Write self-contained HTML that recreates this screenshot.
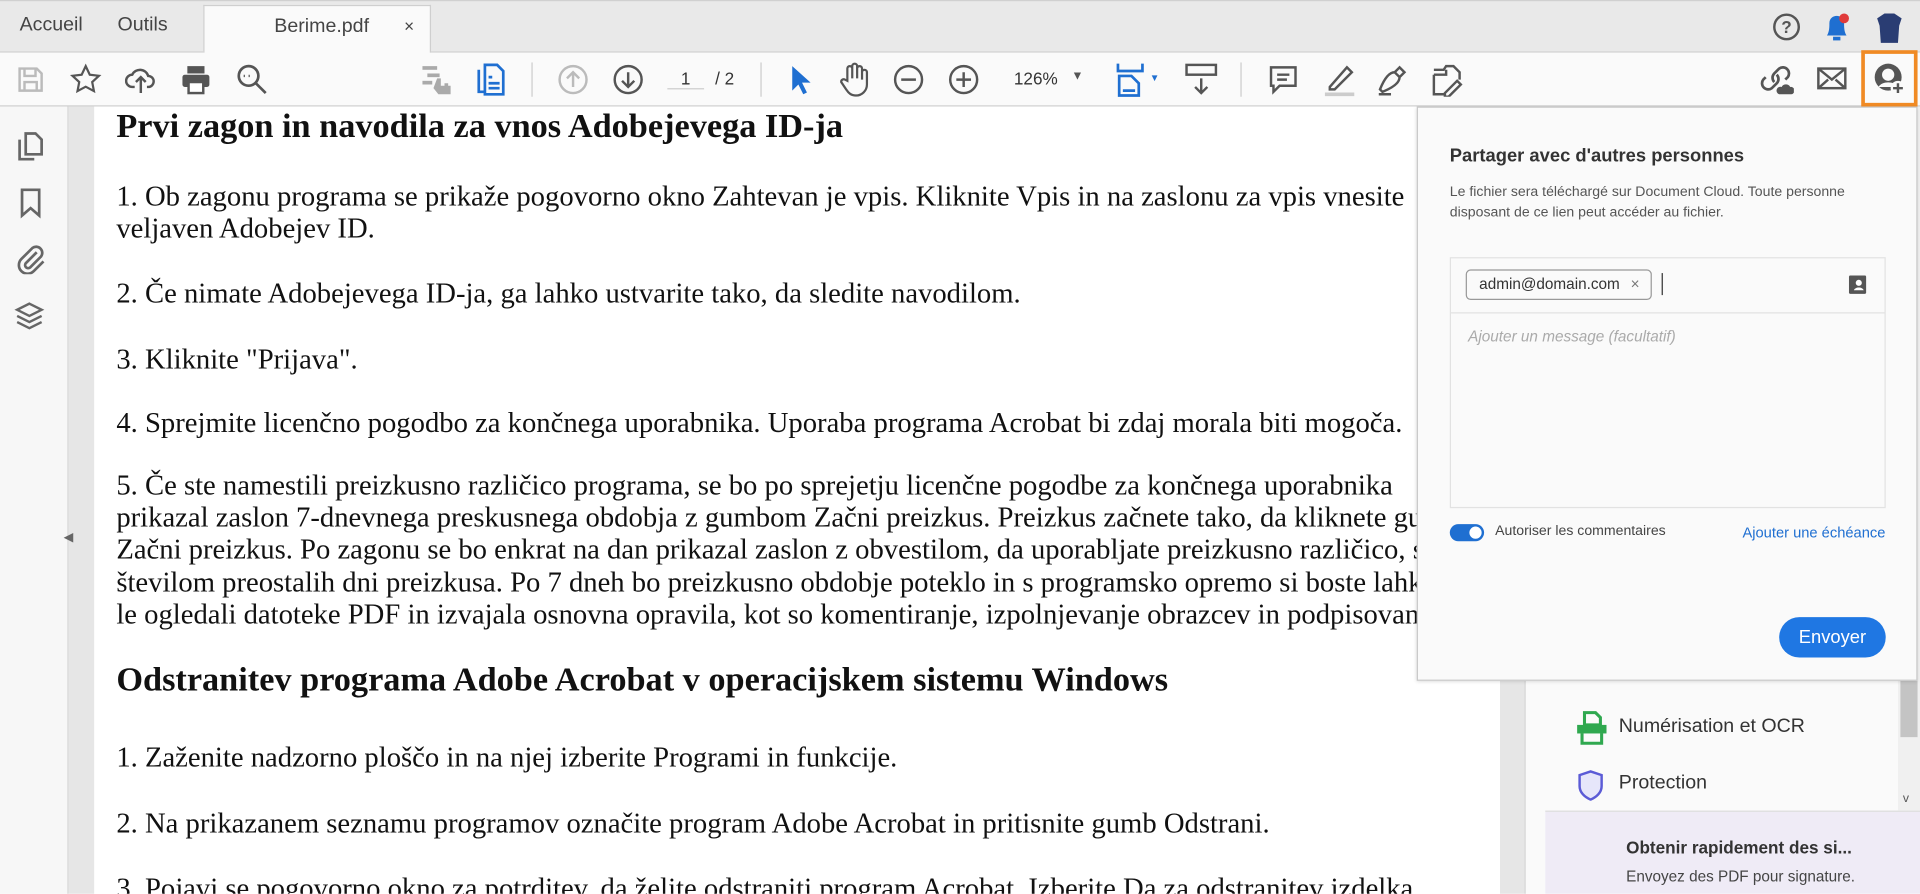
<!DOCTYPE html>
<html><head><meta charset="utf-8"><style>
*{box-sizing:border-box;margin:0;padding:0}
html,body{width:1920px;height:894px;overflow:hidden;background:#fff}
#w{position:absolute;left:0;top:0;width:1568px;height:730px;transform:scale(1.22449);transform-origin:0 0;font-family:"Liberation Sans",sans-serif;overflow:hidden}
.tabs{position:absolute;left:0;top:0;width:1568px;height:43px;background:#e9e9e9;border-top:1px solid #d0d0d0;border-bottom:1px solid #cfcfcf}
.tabs span{position:absolute;top:11px;font-size:16px;color:#444}
.tab{position:absolute;left:166px;top:3px;width:186px;height:40px;background:#fafafa;border:1px solid #cfcfcf;border-bottom:none}
.tb{position:absolute;left:0;top:43px;width:1568px;height:44px;background:#fafafa;border-bottom:1px solid #cfcfcf}
.ic{position:absolute;top:52px}
.side{position:absolute;left:0;top:87px;width:56px;height:643px;background:#f7f7f7;border-right:1px solid #d6d6d6}
.gut{position:absolute;left:56px;top:87px;width:21px;height:643px;background:#e6e6e6}
.page{position:absolute;left:77px;top:87px;width:1148px;height:643px;background:#fff;overflow:hidden;font-family:"Liberation Serif",serif;color:#111;white-space:nowrap}
.page div{position:absolute;left:18px;font-size:23.4px}
.page .h{font-weight:bold;font-size:28px}
.rg{position:absolute;left:1225px;top:87px;width:20px;height:643px;background:#e6e6e6}
.rp{position:absolute;left:1245px;top:87px;width:323px;height:643px;background:#fafafa;border-left:1px solid #d6d6d6;overflow:hidden}
.sb{position:absolute;left:1550px;top:87px;width:18px;height:575px;background:#f0f0f0}
.pop{position:absolute;left:1157px;top:87px;width:409px;height:469px;background:#fafafa;border:1px solid #c8c8c8;box-shadow:0 1px 3px rgba(0,0,0,.15);font-family:"Liberation Sans",sans-serif}
</style></head><body><div id="w">
<div class="tabs">
<span style="left:16px">Accueil</span><span style="left:96px">Outils</span>
<div class="tab"><span style="left:57px;top:8px">Berime.pdf</span><span style="left:163px;top:8px;font-size:14px">×</span></div>
<svg style="position:absolute;left:1447px;top:9px" width="24" height="24"><circle cx="12" cy="12" r="10" fill="none" stroke="#555" stroke-width="2"/><text x="12" y="17" text-anchor="middle" font-size="14" font-weight="bold" fill="#555" font-family="Liberation Sans">?</text></svg>
<svg style="position:absolute;left:1489px;top:9px" width="22" height="26"><path d="M3 19 C5 16 5 12 5 9 C5 5 8 3 11 3 C14 3 17 5 17 9 C17 12 17 16 19 19Z" fill="#1f6fd1"/><rect x="8" y="20" width="6" height="3" fill="#1f6fd1"/><circle cx="17" cy="5" r="4" fill="#e03b3b"/></svg>
<svg style="position:absolute;left:1530px;top:8px" width="26" height="28"><path d="M3 6 L9 2 L17 2 L23 6 L21 12 L20 26 L6 26 L5 12Z" fill="#2a3d73"/></svg>
</div>
<div class="tb">
<svg class="ic" style="left:13px;top:10px" width="24" height="24" fill="none" stroke="#bbb" stroke-width="2"><path d="M3 3h14l4 4v14H3z M7 3v6h9V3 M7 21v-7h10v7"/></svg>
<svg class="ic" style="left:57px;top:9px" width="26" height="26" fill="none" stroke="#555" stroke-width="1.8"><path d="M13 2l3.3 7 7.5.9-5.5 5.1 1.4 7.4L13 18.8 6.3 22.4l1.4-7.4L2.2 9.9l7.5-.9z"/></svg>
<svg class="ic" style="left:102px;top:9px" width="26" height="26" fill="none" stroke="#555" stroke-width="2"><path d="M8 19H6a5 5 0 0 1 0-10 7 7 0 0 1 13 1 4.5 4.5 0 0 1 0 9h-1 M13 24V12 M9 15l4-4 4 4"/></svg>
<svg class="ic" style="left:147px;top:9px" width="26" height="26"><rect x="6" y="2" width="14" height="6" fill="#555"/><rect x="2" y="9" width="22" height="10" rx="2" fill="#555"/><rect x="7" y="15" width="12" height="9" fill="#fff" stroke="#555" stroke-width="2"/></svg>
<svg class="ic" style="left:193px;top:9px" width="26" height="26" fill="none" stroke="#555" stroke-width="2.2"><circle cx="10" cy="10" r="8"/><path d="M16 16l8 8"/><path d="M6 10h1M10 10h1M14 10h0" stroke-width="2"/></svg>
<svg class="ic" style="left:343px;top:9px" width="28" height="26" fill="#aaa"><rect x="2" y="2" width="12" height="3"/><rect x="6" y="8" width="10" height="3"/><rect x="2" y="14" width="8" height="3"/><path d="M14 12h3v6h3v-2h3v2h2v7H15l-4-5z"/></svg>
<svg class="ic" style="left:389px;top:8px" width="24" height="28" fill="none" stroke="#1f6fd1" stroke-width="2.2"><path d="M2 6v18h4 M7 2h10l5 5v19H7z M10 12h3 M10 17h9 M10 21h9"/></svg>
<div style="position:absolute;left:434px;top:8px;width:1px;height:28px;background:#ccc"></div>
<svg class="ic" style="left:455px;top:9px" width="26" height="26" fill="none" stroke="#bbb" stroke-width="2"><circle cx="13" cy="13" r="11"/><path d="M13 19V7M8 12l5-5 5 5"/></svg>
<svg class="ic" style="left:500px;top:9px" width="26" height="26" fill="none" stroke="#555" stroke-width="2"><circle cx="13" cy="13" r="11"/><path d="M13 7v12M8 14l5 5 5-5"/></svg>
<span style="position:absolute;left:545px;top:13px;width:30px;border-bottom:1px solid #ccc;text-align:center;font-size:14px;color:#333">1</span>
<span style="position:absolute;left:584px;top:13px;font-size:14px;color:#333">/ 2</span>
<div style="position:absolute;left:621px;top:8px;width:1px;height:28px;background:#ccc"></div>
<svg class="ic" style="left:644px;top:9px" width="20" height="26"><path d="M3 2v20l5-5 4 8 3-1.5-4-8h7z" fill="#1f6fd1"/></svg>
<svg class="ic" style="left:684px;top:7px" width="28" height="30" fill="none" stroke="#555" stroke-width="1.8"><path d="M8 16V6a2 2 0 0 1 4 0v8V4a2 2 0 0 1 4 0v10V6a2 2 0 0 1 4 0v9V9a2 2 0 0 1 4 0v10c0 5-4 9-9 9-4 0-6-2-8-5l-4-6a2 2 0 0 1 3-2z"/></svg>
<svg class="ic" style="left:729px;top:9px" width="26" height="26" fill="none" stroke="#555" stroke-width="2"><circle cx="13" cy="13" r="11"/><path d="M7 13h12"/></svg>
<svg class="ic" style="left:774px;top:9px" width="26" height="26" fill="none" stroke="#555" stroke-width="2"><circle cx="13" cy="13" r="11"/><path d="M7 13h12M13 7v12"/></svg>
<span style="position:absolute;left:828px;top:13px;font-size:14px;color:#333">126%</span>
<span style="position:absolute;left:875px;top:14px;font-size:10px;color:#555">▼</span>
<svg class="ic" style="left:911px;top:7px" width="24" height="30" fill="none" stroke="#1f6fd1" stroke-width="2.2"><path d="M2 2v6h20V2 M3 28V12h10l6 6v10z M6 24h10"/></svg>
<span style="position:absolute;left:939px;top:16px;font-size:8px;color:#1f6fd1">▼</span>
<svg class="ic" style="left:967px;top:8px" width="28" height="28" fill="none" stroke="#555" stroke-width="2"><rect x="2" y="2" width="24" height="8"/><path d="M14 13v12M9 20l5 5 5-5"/></svg>
<div style="position:absolute;left:1013px;top:8px;width:1px;height:28px;background:#ccc"></div>
<svg class="ic" style="left:1035px;top:9px" width="26" height="26" fill="none" stroke="#555" stroke-width="2"><path d="M3 3h20v15H10l-5 5v-5H3z M8 9h10M8 13h8"/></svg>
<svg class="ic" style="left:1080px;top:8px" width="28" height="28" fill="none" stroke="#555" stroke-width="2"><path d="M6 20L20 4l4 4L10 22H6z"/><path d="M2 26h24" stroke="#ccc" stroke-width="3"/></svg>
<svg class="ic" style="left:1123px;top:8px" width="28" height="28" fill="none" stroke="#555" stroke-width="2"><path d="M4 22c4-10 8-14 12-14l4 4c0 4-4 8-14 12z M16 8l4-4 4 4-4 4 M3 26h10"/></svg>
<svg class="ic" style="left:1167px;top:8px" width="28" height="28" fill="none" stroke="#555" stroke-width="2"><path d="M4 6h8l2-3h6l5 5v6 M4 10v16h8 M4 10h10v-4 M13 25l10-10 3 3-10 10h-3z"/></svg>
<svg class="ic" style="left:1437px;top:8px" width="28" height="28" fill="none" stroke="#555" stroke-width="2.2"><path d="M12 16a5 5 0 0 1 0-7l4-4a5 5 0 0 1 7 7l-2 2 M14 10a5 5 0 0 1 0 7l-4 4a5 5 0 0 1-7-7l2-2"/><path d="M16 26h10a3 3 0 0 0-1-6 4 4 0 0 0-7 0 3 3 0 0 0-2 6z" fill="#555" stroke="none"/></svg>
<svg class="ic" style="left:1483px;top:11px" width="26" height="20" fill="none" stroke="#555" stroke-width="2"><rect x="2" y="2" width="22" height="16"/><path d="M2 2l11 9 11-9M2 18l8-7M24 18l-8-7"/></svg>
<div style="position:absolute;left:1520px;top:-2px;width:46px;height:46px;border:3px solid #f08a24"></div>
<svg class="ic" style="left:1529px;top:7px" width="28" height="30"><circle cx="13" cy="13" r="11" fill="#555"/><circle cx="13" cy="11" r="5" fill="#fafafa"/><path d="M5 21c3-5 13-5 16 0" fill="#fafafa"/><circle cx="21" cy="22" r="6" fill="#fafafa"/><path d="M21 18v8M17 22h8" stroke="#555" stroke-width="2"/></svg>
</div>
<div class="side">
<svg style="position:absolute;left:13px;top:20px" width="24" height="26" fill="none" stroke="#666" stroke-width="2.2"><path d="M8 2h8l5 5v12H8z M3 7v16h12"/></svg>
<svg style="position:absolute;left:15px;top:66px" width="20" height="26" fill="none" stroke="#666" stroke-width="2.2"><path d="M3 2h14v21l-7-6-7 6z"/></svg>
<svg style="position:absolute;left:12px;top:111px" width="26" height="26" fill="none" stroke="#666" stroke-width="2.2"><path d="M18 8L9 17a2.5 2.5 0 0 0 3.5 3.5l9-9a5 5 0 0 0-7-7l-9 9a7 7 0 0 0 10 10l8-8"/></svg>
<svg style="position:absolute;left:11px;top:158px" width="26" height="26" fill="none" stroke="#666" stroke-width="2"><path d="M13 3l10 5-10 5-10-5z M3 13l10 5 10-5 M3 18l10 5 10-5"/></svg>
</div>
<div class="gut"><span style="position:absolute;left:-4px;top:347px;font-size:10px;color:#666">◀</span></div>
<div class="page">
<div class="h" style="top:1px">Prvi zagon in navodila za vnos Adobejevega ID-ja</div>
<div style="top:61px">1. Ob zagonu programa se prikaže pogovorno okno Zahtevan je vpis. Kliknite Vpis in na zaslonu za vpis vnesite</div>
<div style="top:87px">veljaven Adobejev ID.</div>
<div style="top:140px">2. Če nimate Adobejevega ID-ja, ga lahko ustvarite tako, da sledite navodilom.</div>
<div style="top:194px">3. Kliknite "Prijava".</div>
<div style="top:246px">4. Sprejmite licenčno pogodbo za končnega uporabnika. Uporaba programa Acrobat bi zdaj morala biti mogoča.</div>
<div style="top:297px">5. Če ste namestili preizkusno različico programa, se bo po sprejetju licenčne pogodbe za končnega uporabnika</div>
<div style="top:323px">prikazal zaslon 7-dnevnega preskusnega obdobja z gumbom Začni preizkus. Preizkus začnete tako, da kliknete gumb</div>
<div style="top:349px">Začni preizkus. Po zagonu se bo enkrat na dan prikazal zaslon z obvestilom, da uporabljate preizkusno različico, s</div>
<div style="top:376px">številom preostalih dni preizkusa. Po 7 dneh bo preizkusno obdobje poteklo in s programsko opremo si boste lahko</div>
<div style="top:402px">le ogledali datoteke PDF in izvajala osnovna opravila, kot so komentiranje, izpolnjevanje obrazcev in podpisovanje.</div>
<div class="h" style="top:453px">Odstranitev programa Adobe Acrobat v operacijskem sistemu Windows</div>
<div style="top:519px">1. Zaženite nadzorno ploščo in na njej izberite Programi in funkcije.</div>
<div style="top:573px">2. Na prikazanem seznamu programov označite program Adobe Acrobat in pritisnite gumb Odstrani.</div>
<div style="top:626px">3. Pojavi se pogovorno okno za potrditev, da želite odstraniti program Acrobat. Izberite Da za odstranitev izdelka.</div>
</div>
<div class="rg"></div>
<div class="rp">
<svg style="position:absolute;left:40px;top:493px" width="26" height="30"><path d="M8 2h9l4 4v6H8z" fill="none" stroke="#2fa84f" stroke-width="2.5"/><rect x="2" y="12" width="24" height="7" fill="#2fa84f"/><path d="M6 19v8h16v-8" fill="none" stroke="#2fa84f" stroke-width="2.5"/></svg>
<span style="position:absolute;left:76px;top:498px;font-size:16px;color:#333">Numérisation et OCR</span>
<svg style="position:absolute;left:42px;top:541px" width="22" height="26"><path d="M11 2l9 3v9c0 5-4 9-9 11-5-2-9-6-9-11V5z" fill="#e6e6fa" stroke="#5b5bd6" stroke-width="2"/></svg>
<span style="position:absolute;left:76px;top:544px;font-size:16px;color:#333">Protection</span>
<div style="position:absolute;left:16px;top:575px;width:307px;height:68px;background:#efebf6;border-top:1px solid #ddd">
<div style="position:absolute;left:66px;top:21px;font-size:14px;font-weight:bold;color:#333">Obtenir rapidement des si...</div>
<div style="position:absolute;left:66px;top:46px;font-size:12.5px;color:#444">Envoyez des PDF pour signature.</div>
</div>
</div>
<div class="sb"><div style="position:absolute;left:2px;top:400px;width:14px;height:115px;background:#c4c4c4"></div><span style="position:absolute;left:4px;top:560px;font-size:10px;color:#555">v</span></div>
<div class="pop">
<div style="position:absolute;left:26px;top:31px;font-size:15px;font-weight:bold;color:#333">Partager avec d'autres personnes</div>
<div style="position:absolute;left:26px;top:61px;font-size:11.5px;line-height:17px;color:#555;width:370px">Le fichier sera téléchargé sur Document Cloud. Toute personne disposant de ce lien peut accéder au fichier.</div>
<div style="position:absolute;left:26px;top:122px;width:356px;height:205px;border:1px solid #e2e2e2;background:#fafafa">
<div style="position:absolute;left:0;top:44px;width:354px;height:1px;background:#e2e2e2"></div>
<div style="position:absolute;left:12px;top:9px;width:152px;height:25px;border:1px solid #999;border-radius:4px;font-size:12.5px;color:#333;padding:4px 10px">admin@domain.com <span style="position:absolute;right:9px;color:#777">×</span></div>
<div style="position:absolute;left:172px;top:12px;width:1px;height:18px;background:#333"></div>
<svg style="position:absolute;left:324px;top:13px" width="16" height="17"><rect x="1" y="1" width="14" height="15" rx="1" fill="#555"/><circle cx="9" cy="7" r="2.5" fill="#fff"/><path d="M5 13c1-3 7-3 8 0z" fill="#fff"/></svg>
<div style="position:absolute;left:14px;top:57px;font-size:12.5px;font-style:italic;color:#aaa">Ajouter un message (facultatif)</div>
</div>
<div style="position:absolute;left:26px;top:340px;width:28px;height:14px;border-radius:7px;background:#1f6fd1"><div style="position:absolute;right:2px;top:2px;width:10px;height:10px;border-radius:5px;background:#fff"></div></div>
<div style="position:absolute;left:63px;top:340px;font-size:11.5px;color:#444">Autoriser les commentaires</div>
<div style="position:absolute;left:265px;top:340px;font-size:12px;color:#1f6fd1">Ajouter une échéance</div>
<div style="position:absolute;left:295px;top:416px;width:87px;height:33px;border-radius:17px;background:#1f77e3;color:#fff;font-size:15px;text-align:center;line-height:33px">Envoyer</div>
</div>
</div></body></html>
